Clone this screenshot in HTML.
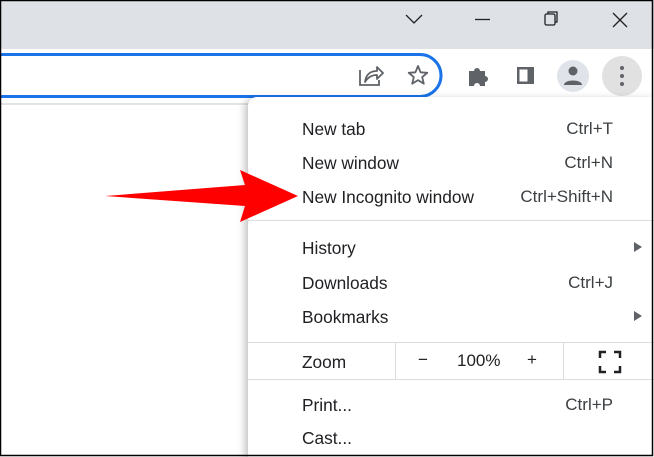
<!DOCTYPE html><html><head><style>
html,body{margin:0;width:654px;height:457px;overflow:hidden;}
body{position:relative;background:#fff;font-family:"Liberation Sans",sans-serif;}
.a{position:absolute}
.t{position:absolute;left:302px;font-size:17.3px;color:#202124;line-height:20px}
.k{position:absolute;right:41px;font-size:17px;color:#3c4043;line-height:20px}
.sep{position:absolute;left:248px;right:0;height:1px;background:#dadce0}
.tri{position:absolute;left:634px;width:0;height:0;border-left:8px solid #5f6368;border-top:5px solid transparent;border-bottom:5px solid transparent}
</style></head><body>
<div class="a" style="left:0;top:0;width:654px;height:49px;background:#dee1e6"></div>
<svg class="a" style="left:0;top:0" width="654" height="110">
<path d="M406 15 L414 23 L422 15" fill="none" stroke="#202124" stroke-width="1.3"/>
<path d="M475 19.5 H490" stroke="#202124" stroke-width="1.3"/>
<rect x="545" y="14" width="10" height="11" rx="1.5" fill="none" stroke="#202124" stroke-width="1.3"/>
<path d="M548 14 V12 H557 V22 H555" fill="none" stroke="#202124" stroke-width="1.3"/>
<path d="M613 13 L627 27 M627 13 L613 27" stroke="#202124" stroke-width="1.3"/>
<path d="M-10 54.5 H420 A21 21 0 0 1 420 96.5 H-10" fill="none" stroke="#1a73e8" stroke-width="3"/>
<path d="M360 70 V85 H379 V80" fill="none" stroke="#5f6368" stroke-width="1.8"/>
<path d="M365 82 C366 74 371 71 377 71 V67 L383 73 L377 79 V75 C372 75 368 77 365 82Z" fill="none" stroke="#5f6368" stroke-width="1.8" stroke-linejoin="round"/>
<path d="M418 66 L420.6 72.3 L427.3 72.8 L422.2 77.1 L423.8 83.7 L418 80.1 L412.2 83.7 L413.8 77.1 L408.7 72.8 L415.4 72.3Z" fill="none" stroke="#5f6368" stroke-width="1.8" stroke-linejoin="round"/>
<path d="M469 71 H474 A3 3 0 0 1 480 71 H485 V76 A3 3 0 0 1 485 82 V86 H480 A3 3 0 0 0 474 86 H469Z" fill="#5f6368"/>
<rect x="517" y="67" width="17" height="17" fill="#5f6368"/><rect x="519.5" y="69.5" width="8" height="12" fill="#fff"/>
<circle cx="573" cy="76" r="16" fill="#e0e3e9"/>
<circle cx="573" cy="71" r="4.5" fill="#5f6368"/><path d="M564 85 C564 79 582 79 582 85Z" fill="#5f6368"/>
<circle cx="622" cy="76" r="20" fill="#e1e1e1"/>
<circle cx="622" cy="68" r="2" fill="#5f6368"/><circle cx="622" cy="76" r="2" fill="#5f6368"/><circle cx="622" cy="84" r="2" fill="#5f6368"/>
<rect x="0" y="103" width="654" height="2" fill="#e3e3e3"/>
</svg>
<div class="a" style="left:248px;top:97px;width:406px;height:360px;background:#fff;border-radius:9px 0 0 0;box-shadow:-3px 2px 8px rgba(0,0,0,.25)"></div>
<div class="t" style="top:119px">New tab</div><div class="k" style="top:119px">Ctrl+T</div>
<div class="t" style="top:153px">New window</div><div class="k" style="top:153px">Ctrl+N</div>
<div class="t" style="top:187px">New Incognito window</div><div class="k" style="top:187px">Ctrl+Shift+N</div>
<div class="sep" style="top:220px"></div>
<div class="t" style="top:238px">History</div><div class="tri" style="top:242px"></div>
<div class="t" style="top:273px">Downloads</div><div class="k" style="top:273px">Ctrl+J</div>
<div class="t" style="top:307px">Bookmarks</div><div class="tri" style="top:311px"></div>
<div class="sep" style="top:342px"></div>
<div class="t" style="top:352px">Zoom</div>
<div class="a" style="left:395px;top:343px;width:1px;height:36px;background:#dadce0"></div>
<div class="a" style="left:563px;top:343px;width:1px;height:36px;background:#dadce0"></div>
<div class="a" style="left:418px;top:350px;font-size:17px;color:#202124">−</div>
<div class="a" style="left:457px;top:351px;font-size:17px;color:#202124">100%</div>
<div class="a" style="left:527px;top:350px;font-size:17px;color:#202124">+</div>
<svg class="a" style="left:598px;top:350px" width="24" height="24"><path d="M2 8 V2 H8 M16 2 H22 V8 M22 16 V22 H16 M8 22 H2 V16" fill="none" stroke="#202124" stroke-width="2.5"/></svg>
<div class="sep" style="top:379px"></div>
<div class="t" style="top:395px">Print...</div><div class="k" style="top:395px">Ctrl+P</div>
<div class="t" style="top:428px">Cast...</div>
<svg class="a" style="left:0;top:0" width="654" height="457">
<path d="M105 196 L245 185 L240 170 L298 196 L240 222 L245 206 Z" fill="#ff0000"/>
<rect x="0.5" y="0.5" width="652" height="455" fill="none" stroke="#000" stroke-width="1.5"/>
</svg>
</body></html>
